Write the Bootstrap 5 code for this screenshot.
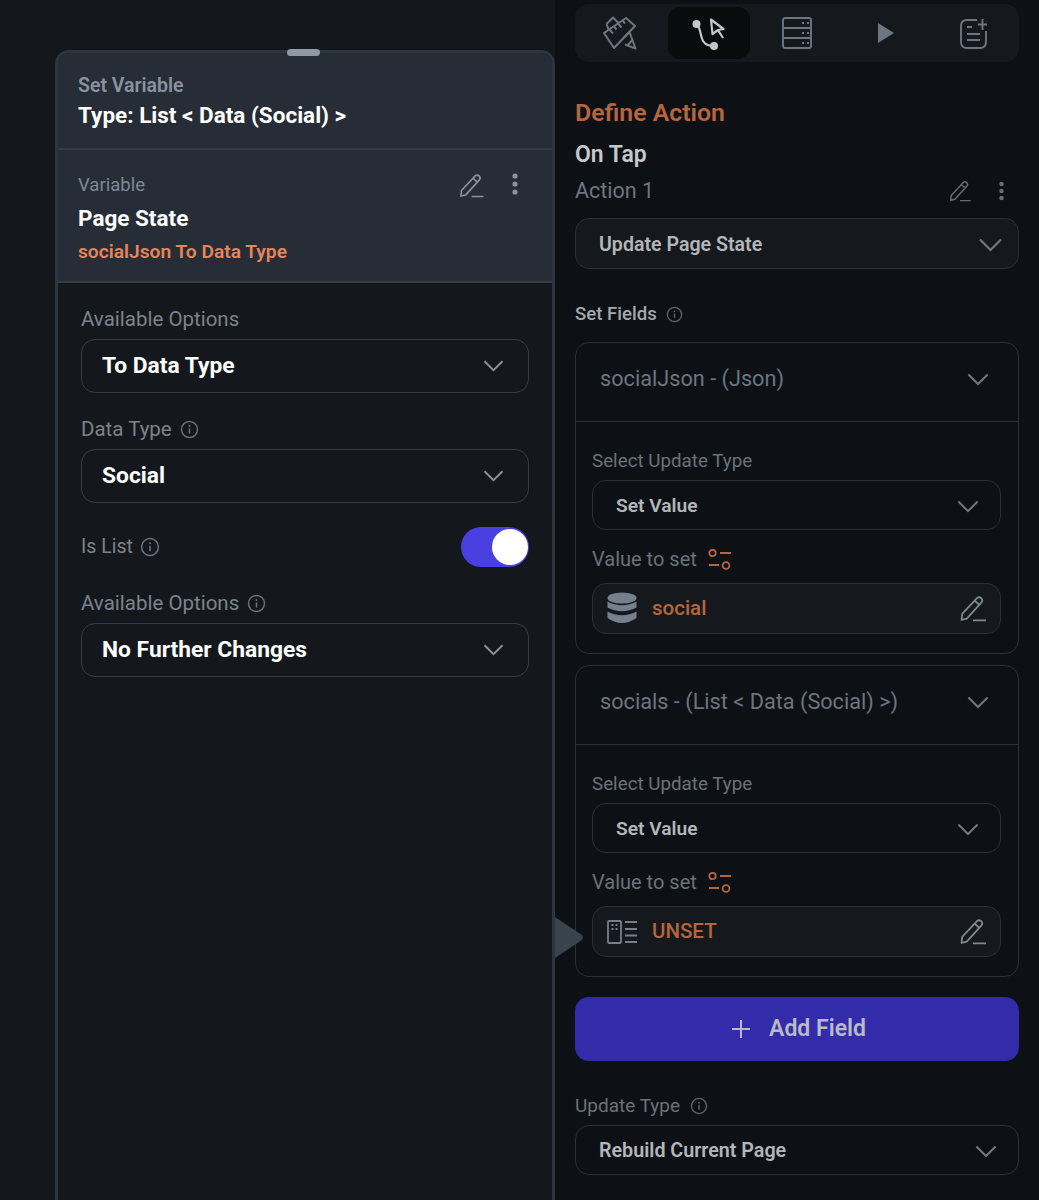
<!DOCTYPE html>
<html lang="en">
<head>
  <meta charset="UTF-8">
  <meta name="viewport" content="width=device-width, initial-scale=1.0">
  <title>Set Variable - Define Action</title>
  <link rel="stylesheet" href="https://cdn.jsdelivr.net/npm/bootstrap@5.3.0/dist/css/bootstrap.min.css">
  <style>
    html, body { height: 1200px; overflow: hidden; background: #14171b; }
    body { font-family: Roboto, "Liberation Sans", sans-serif; }

    .stage { height: 1200px; position: relative; overflow: hidden; }
    .left-gutter { width: 55px; flex: none; }

    /* left card */
    .var-card { width: 500px; flex: none; height: 1150px; margin-top: 50px; position: relative; background: #14181c; border: 3px solid #2e353f; border-bottom: 0; border-radius: 14px 14px 0 0; }
    .grab { position: absolute; top: -4px; left: 229px; width: 33px; height: 7px; border-radius: 4px; background: #8e98a6; }
    .var-head { background: #262d36; padding: 21px 20px 19px; border-radius: 11px 11px 0 0; border-bottom: 2px solid #333b45; }
    .var-sub { background: #262d36; padding: 23px 20px 17px; border-bottom: 2px solid #333b45; }
    .var-label { font-size: 18.5px; line-height: 24px; color: #7f8894; }
    .var-label.strong { font-size: 19.5px; font-weight: 600; color: #8a92a0; }
    .var-title { font-size: 22.5px; line-height: 28px; font-weight: 700; color: #fff; }
    .var-head .var-title { margin-top: 3px; }
    .var-sub .var-title { margin-top: 7px; }
    .var-orange { font-size: 19.2px; line-height: 24px; font-weight: 600; color: #e8845a; margin-top: 8px; }
    .var-tools { gap: 27px; margin-right: 13px; color: #8a929d; }
    .var-body { padding: 24px 23px; }
    .field-label { font-size: 20.5px; line-height: 24px; color: #7c838d; height: 24px; gap: 8px; }
    .field-label.short { font-size: 19.5px; gap: 7px; }
    .big-select { height: 54px; margin-top: 8px; padding: 0 24px 0 20px; border: 1px solid #363c45; border-radius: 14px; font-size: 22.8px; font-weight: 700; color: #fff; }
    .chev-big { color: #8a929d; }
    .info-left { color: #6b727c; }
    .toggle-track { width: 68px; height: 40px; border-radius: 20px; background: #4a3fe0; padding: 2px 1px 2px 0; }
    .toggle-knob { width: 36px; height: 36px; border-radius: 50%; background: #fff; }
    .gap-t { margin-top: 24px; }

    /* right panel */
    .action-panel { width: 484px; flex: none; height: 1200px; background: #0d1115; padding: 4px 20px 0; }
    .tab-bar { height: 58px; background: #15191d; border-radius: 14px; padding: 3px 4px; }
    .tab-item { width: 82px; height: 52px; border-radius: 12px; }
    .tab-item.on { background: #090b0d; }
    .act-title { font-size: 24.8px; line-height: 30px; font-weight: 600; color: #b5663f; margin-top: 36px; }
    .act-event { font-size: 23px; line-height: 30px; font-weight: 600; color: #c6c8cb; margin-top: 12px; }
    .act-name { font-size: 21.5px; line-height: 30px; color: #6f7680; margin-top: 6px; height: 30px; }
    .act-tools { gap: 26px; margin-right: 14px; color: #666d77; }
    .act-select { height: 51px; padding: 2px 15px 0 23px; background: #15191d; border: 1px solid #2a3038; border-radius: 14px; font-size: 19.6px; font-weight: 600; color: #b4b6b9; margin-top: 12px; }
    .act-fields { font-size: 18.6px; line-height: 24px; font-weight: 500; color: #a5a8ac; margin-top: 33px; gap: 9px; }
    .field-box { height: 312px; border: 1px solid #2a3038; border-radius: 14px; }
    .field-box.next { margin-top: 11px; }
    .field-top { height: 79px; padding: 0 29px 5px 24px; border-bottom: 1px solid #2a3038; font-size: 21.7px; color: #6d7480; }
    .field-inner { padding: 27px 17px 0 16px; }
    .mini-label { font-size: 18.8px; line-height: 24px; color: #6b727c; height: 24px; gap: 10px; }
    .mini-label.value-row { font-size: 20px; margin-top: 17px; gap: 11px; }
    .mini-label.update-row { font-size: 19px; margin-top: 33px; }
    .mini-select { height: 50px; margin-top: 7px; padding: 2px 21px 0 23px; border: 1px solid #2a3038; border-radius: 14px; font-size: 19.2px; font-weight: 600; color: #b4b6b9; }
    .mini-select.rebuild { font-size: 19.7px; }
    .chev-dim { color: #6f7680; }
    .info-dim { color: #5d646e; }
    .value-box { height: 51px; margin-top: 12px; padding: 0 13px 0 14px; background: #15191d; border: 1px solid #2a3038; border-radius: 14px; font-size: 20.5px; font-weight: 500; color: #b5663f; }
    .value-name { gap: 15px; }
    .pencil-dim { color: #7f8791; }
    .add-btn { height: 64px; margin-top: 20px; width: 100%; padding-left: 16px; gap: 19px; background: #322caa; border: 0; border-radius: 14px; font-size: 23px; font-weight: 600; color: #b9b9c8; }
    .pointer-tri { position: absolute; left: 555px; top: 917px; width: 29px; height: 41px; }
    .ic { display: block; flex: none; }
  </style>
</head>
<body>
  <svg width="0" height="0" class="position-absolute">
    <defs>
      <symbol id="i-pencil" viewBox="0 0 26 26">
        <path d="M2 24 L2.6 18.2 L16.6 3.2 Q18.6 1.2 20.9 3 Q23 5.2 21 7.4 L7 22.8 Z M14.6 5.4 L19 9.4 M13 24.4 L25.5 24.4" fill="none" stroke="currentColor" stroke-width="1.7" stroke-linejoin="round"/>
      </symbol>
      <symbol id="i-info" viewBox="0 0 20 20">
        <circle cx="10" cy="10" r="8.4" fill="none" stroke="currentColor" stroke-width="1.5"/>
        <rect x="9.2" y="8.8" width="1.6" height="5.4" fill="currentColor"/>
        <circle cx="10" cy="6.3" r="1" fill="currentColor"/>
      </symbol>
      <symbol id="i-chev" viewBox="0 0 24 14">
        <path d="M1.5 1.5 L12 12 L22.5 1.5" fill="none" stroke="currentColor" stroke-width="2.2"/>
      </symbol>
      <symbol id="i-dots" viewBox="0 0 8 22">
        <circle cx="4" cy="3" r="2.6" fill="currentColor"/>
        <circle cx="4" cy="11" r="2.6" fill="currentColor"/>
        <circle cx="4" cy="19" r="2.6" fill="currentColor"/>
      </symbol>
      <symbol id="i-sliders" viewBox="0 0 23 21">
        <circle cx="4.500" cy="4" r="3.2" fill="none" stroke="#b5663f" stroke-width="1.8"/>
        <path d="M12 4 L23 4 M1 16 L11 16" stroke="#b5663f" stroke-width="1.8"/>
        <circle cx="18" cy="16.500" r="3.4" fill="none" stroke="#b5663f" stroke-width="1.8"/>
      </symbol>
    </defs>
  </svg>

  <div class="stage d-flex">
    <div class="left-gutter"></div>

    <!-- Set Variable card -->
    <div class="var-card">
      <div class="grab"></div>
      <div class="var-head">
        <div class="var-label strong">Set Variable</div>
        <div class="var-title">Type: List &lt; Data (Social) &gt;</div>
      </div>
      <div class="var-sub">
        <div class="d-flex justify-content-between">
          <div>
            <div class="var-label">Variable</div>
            <div class="var-title">Page State</div>
          </div>
          <div class="var-tools d-flex">
            <svg class="ic" width="25" height="25"><use href="#i-pencil"/></svg>
            <svg class="ic" width="8" height="22"><use href="#i-dots"/></svg>
          </div>
        </div>
        <div class="var-orange">socialJson To Data Type</div>
      </div>
      <div class="var-body">
        <div class="field-label">Available Options</div>
        <div class="big-select d-flex align-items-center justify-content-between">
          <span>To Data Type</span>
          <svg class="ic chev-big" width="21" height="12"><use href="#i-chev"/></svg>
        </div>

        <div class="field-label gap-t d-flex align-items-center">Data Type
          <svg class="ic info-left" width="19" height="19"><use href="#i-info"/></svg>
        </div>
        <div class="big-select d-flex align-items-center justify-content-between">
          <span>Social</span>
          <svg class="ic chev-big" width="21" height="12"><use href="#i-chev"/></svg>
        </div>

        <div class="gap-t d-flex align-items-center justify-content-between">
          <div class="field-label short d-flex align-items-center">Is List
            <svg class="ic info-left" width="20" height="20"><use href="#i-info"/></svg>
          </div>
          <div class="toggle-track d-flex justify-content-end">
            <div class="toggle-knob"></div>
          </div>
        </div>

        <div class="field-label gap-t d-flex align-items-center">Available Options
          <svg class="ic info-left" width="19" height="19"><use href="#i-info"/></svg>
        </div>
        <div class="big-select d-flex align-items-center justify-content-between">
          <span>No Further Changes</span>
          <svg class="ic chev-big" width="21" height="12"><use href="#i-chev"/></svg>
        </div>
      </div>
    </div>

    <!-- Define Action panel -->
    <div class="action-panel">
      <div class="tab-bar d-flex align-items-center justify-content-between">
        <div class="tab-item d-flex align-items-center justify-content-center">
          <svg class="ic" width="34" height="34" viewBox="0 0 34 34" fill="none" stroke="#6d7580" stroke-width="2" stroke-linejoin="round">
            <path d="M1 17 L23 2 L32 10 L11 32 Z"/>
            <path d="M6.500 13.500 L10 17.500 M11 10.500 L13.500 13.500 M15 7.500 L18.500 11.500 M19.500 4.500 L22 7.500"/>
            <path d="M3.500 8 L10 1.500 L15.500 7 M5.500 13.500 L3.500 8"/>
            <path d="M21 21.500 L26.500 16 L32.500 32.500 L22 28.500 M24 30 L29 24.500"/>
          </svg>
        </div>
        <div class="tab-item on d-flex align-items-center justify-content-center">
          <svg class="ic" width="34" height="34" viewBox="0 0 34 34" fill="none" stroke="#c4c6c9" stroke-width="2.200">
            <circle cx="4.500" cy="8" r="4" fill="#c4c6c9" stroke="none"/>
            <circle cx="22" cy="30" r="4" fill="#c4c6c9" stroke="none"/>
            <path d="M4.500 8 C9 12 8 20 11 25 C13.500 29 17 30 22 30"/>
            <path d="M19 3.500 L31.500 13 L26 14 L20.500 18 Z M26 14 L31 22" stroke-linejoin="round"/>
          </svg>
        </div>
        <div class="tab-item d-flex align-items-center justify-content-center">
          <svg class="ic" width="30" height="32" viewBox="0 0 30 32" fill="none" stroke="#6d7580" stroke-width="1.900">
            <rect x="1" y="1" width="28" height="30" rx="2"/>
            <path d="M1 11 L29 11 M1 21 L29 21"/>
            <path d="M20 6 L22 6 M25 6 L27 6 M20 16 L22 16 M25 16 L27 16 M20 26 L22 26 M25 26 L27 26" stroke-width="2"/>
          </svg>
        </div>
        <div class="tab-item d-flex align-items-center justify-content-center">
          <svg class="ic" width="16" height="20" viewBox="0 0 16 20"><path d="M0 0 L16 10 L0 20 Z" fill="#6d7580"/></svg>
        </div>
        <div class="tab-item d-flex align-items-center justify-content-center">
          <svg class="ic" width="28" height="31" viewBox="0 0 28 31" fill="none" stroke="#6d7580" stroke-width="1.900">
            <path d="M17 2 L7 2 Q1 2 1 8 L1 24 Q1 30 7 30 L20 30 Q26 30 26 24 L26 13"/>
            <path d="M7 9 L12 9 M7 16 L20 16 M7 22 L20 22 M18 6.500 L27 6.500 M22.500 1 L22.500 12"/>
          </svg>
        </div>
      </div>

      <div class="act-title">Define Action</div>
      <div class="act-event">On Tap</div>
      <div class="act-name d-flex align-items-center justify-content-between">
        <span>Action 1</span>
        <span class="act-tools d-flex align-items-center">
          <svg class="ic" width="24" height="22"><use href="#i-pencil"/></svg>
          <svg class="ic" width="7" height="20"><use href="#i-dots"/></svg>
        </span>
      </div>
      <div class="act-select d-flex align-items-center justify-content-between">
        <span>Update Page State</span>
        <svg class="ic chev-dim" width="25" height="14"><use href="#i-chev"/></svg>
      </div>

      <div class="act-fields d-flex align-items-center">Set Fields
        <svg class="ic info-dim" width="17" height="17"><use href="#i-info"/></svg>
      </div>

      <div class="field-box mt-3">
        <div class="field-top d-flex align-items-center justify-content-between">
          <span>socialJson - (Json)</span>
          <svg class="ic chev-dim" width="22" height="13"><use href="#i-chev"/></svg>
        </div>
        <div class="field-inner">
          <div class="mini-label">Select Update Type</div>
          <div class="mini-select d-flex align-items-center justify-content-between">
            <span>Set Value</span>
            <svg class="ic chev-dim" width="22" height="13"><use href="#i-chev"/></svg>
          </div>
          <div class="mini-label value-row d-flex align-items-center">Value to set
            <svg class="ic" width="23" height="21"><use href="#i-sliders"/></svg>
          </div>
          <div class="value-box d-flex align-items-center justify-content-between">
            <span class="value-name d-flex align-items-center">
              <svg class="ic" width="30" height="33" viewBox="0 0 30 33" fill="#75808c">
                <ellipse cx="15" cy="6" rx="14.500" ry="5.600"/>
                <path d="M0.500 9.500 Q15 17 29.500 9.500 L29.500 15.500 Q15 23 0.500 15.500 Z"/>
                <path d="M0.500 19.500 Q15 27 29.500 19.500 L29.500 26 Q15 36 0.500 26 Z"/>
              </svg>
              social
            </span>
            <svg class="ic pencil-dim" width="28" height="27"><use href="#i-pencil"/></svg>
          </div>
        </div>
      </div>

      <div class="field-box next">
        <div class="field-top d-flex align-items-center justify-content-between">
          <span>socials - (List &lt; Data (Social) &gt;)</span>
          <svg class="ic chev-dim" width="22" height="13"><use href="#i-chev"/></svg>
        </div>
        <div class="field-inner">
          <div class="mini-label">Select Update Type</div>
          <div class="mini-select d-flex align-items-center justify-content-between">
            <span>Set Value</span>
            <svg class="ic chev-dim" width="22" height="13"><use href="#i-chev"/></svg>
          </div>
          <div class="mini-label value-row d-flex align-items-center">Value to set
            <svg class="ic" width="23" height="21"><use href="#i-sliders"/></svg>
          </div>
          <div class="value-box d-flex align-items-center justify-content-between">
            <span class="value-name d-flex align-items-center">
              <svg class="ic" width="30" height="24" viewBox="0 0 30 24" fill="none" stroke="#75808c" stroke-width="1.800">
                <rect x="1" y="1" width="13" height="22" rx="1"/>
                <path d="M18 2 L30 2 M18 9 L30 9 M18 15.500 L30 15.500 M18 22 L30 22"/>
                <path d="M4.500 5 L6.500 5 M8.500 5 L10.500 5 M4.500 9 L6.500 9 M8.500 9 L10.500 9" stroke-width="2"/>
              </svg>
              UNSET
            </span>
            <svg class="ic pencil-dim" width="28" height="27"><use href="#i-pencil"/></svg>
          </div>
        </div>
      </div>

      <button class="add-btn btn d-flex align-items-center justify-content-center" type="button">
        <svg class="ic" width="18" height="18" viewBox="0 0 18 18"><path d="M9 0 L9 18 M0 9 L18 9" stroke="#b9b9c8" stroke-width="2"/></svg>
        Add Field
      </button>

      <div class="mini-label update-row d-flex align-items-center">Update Type
        <svg class="ic info-dim" width="18" height="18"><use href="#i-info"/></svg>
      </div>
      <div class="mini-select rebuild d-flex align-items-center justify-content-between">
        <span>Rebuild Current Page</span>
        <svg class="ic chev-dim" width="22" height="13"><use href="#i-chev"/></svg>
      </div>
    </div>

    <svg class="pointer-tri" viewBox="0 0 29 41"><path d="M0 0 L27 18 Q29 20.500 27 23 L0 41 Z" fill="#38434e"/></svg>
  </div>
</body>
</html>
